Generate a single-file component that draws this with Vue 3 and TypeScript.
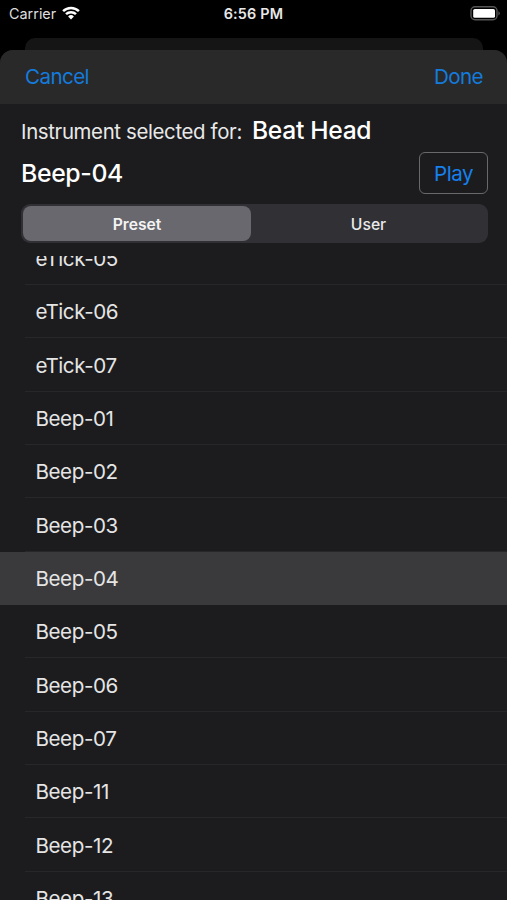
<script setup lang="ts">
import { ref } from 'vue'

const segments = ['Preset', 'User']
const activeSegment = ref('Preset')
const instruments = [
  'eTick-05', 'eTick-06', 'eTick-07',
  'Beep-01', 'Beep-02', 'Beep-03', 'Beep-04', 'Beep-05', 'Beep-06', 'Beep-07',
  'Beep-11', 'Beep-12', 'Beep-13',
]
const selected = ref('Beep-04')
</script>

<template>
  <div class="screen">
    <header class="status">
      <div class="carrier">
        <span>Carrier</span>
        <svg class="wifi" viewBox="0 0 18 14" width="18" height="14">
          <path d="M1.1 5.1a11.3 11.3 0 0 1 15.8 0" />
          <path d="M4 8.2a7.2 7.2 0 0 1 10 0" />
          <path class="dot" d="M9 13.4 6.1 10.5a4.1 4.1 0 0 1 5.8 0z" />
        </svg>
      </div>
      <span class="time">6:56 PM</span>
      <svg class="battery" viewBox="0 0 31 15" width="31" height="15">
        <rect class="shell" x="1" y="0.8" width="26" height="13" rx="4" />
        <rect class="charge" x="3.2" y="3" width="21.8" height="8.8" rx="1.6" />
        <path class="cap" d="M28.4 5.2c2 .8 2 3.4 0 4.2z" />
      </svg>
    </header>
    <div class="backdrop"></div>
    <main class="sheet">
      <nav class="bar">
        <button class="link">Cancel</button>
        <button class="link done">Done</button>
      </nav>
      <section class="details">
        <p class="caption"><span class="label">Instrument selected for:</span><span class="target">Beat Head</span></p>
        <div class="current">
          <h1>{{ selected }}</h1>
          <button class="play">Play</button>
        </div>
        <div class="segmented">
          <button
            v-for="s in segments"
            :key="s"
            class="segment"
            :class="{ active: s === activeSegment }"
            @click="activeSegment = s"
          >{{ s }}</button>
        </div>
      </section>
      <div class="viewport">
        <ul class="list">
          <li
            v-for="name in instruments"
            :key="name"
            class="row"
            :class="{ selected: name === selected }"
            @click="selected = name"
          ><span class="name">{{ name }}</span></li>
        </ul>
      </div>
    </main>
  </div>
</template>

<style>
body {
  margin: 0;
  background: #000;
}
</style>

<style scoped>
.screen {
  height: 900px;
  display: flex;
  flex-direction: column;
  overflow: hidden;
  background: #000;
  color: #fff;
  font-family: Inter, "Liberation Sans", sans-serif;
}
button {
  margin: 0;
  padding: 0;
  border: 0;
  background: none;
  color: inherit;
  font: inherit;
}
.status {
  height: 38px;
  flex: none;
  box-sizing: border-box;
  padding: 0 6px 11px 9px;
  display: grid;
  grid-template-columns: 1fr auto 1fr;
  align-items: center;
  font-size: 14.4px;
}
.carrier {
  display: flex;
  align-items: center;
  gap: 6px;
  color: #dedede;
}
.wifi {
  fill: none;
  stroke: #fff;
  stroke-width: 2.5;
  margin-top: -1px;
}
.wifi .dot {
  fill: #fff;
  stroke: none;
}
.time {
  margin-right: 3px;
  font-weight: 600;
  letter-spacing: 0.2px;
  color: #e8e8e8;
}
.battery {
  justify-self: end;
}
.shell {
  fill: none;
  stroke: #565656;
  stroke-width: 1.4;
}
.charge {
  fill: #fff;
}
.cap {
  fill: #565656;
}
.backdrop {
  height: 12px;
  flex: none;
  margin: 0 24px 0 25px;
  border-radius: 10px 10px 0 0;
  background: #151515;
}
.sheet {
  flex: 1;
  min-height: 0;
  display: flex;
  flex-direction: column;
  overflow: hidden;
  border-radius: 13px 13px 0 0;
  background: #1c1c1e;
}
.bar {
  height: 54px;
  flex: none;
  box-sizing: border-box;
  padding: 0 25px 1px;
  display: flex;
  align-items: center;
  justify-content: space-between;
  background: #292929;
}
.link {
  color: #147bdc;
  font-size: 20.6px;
  letter-spacing: -0.6px;
}
.done {
  margin-right: -1px;
}
.details {
  flex: none;
  height: 152px;
  box-sizing: border-box;
  padding: 11px 19px 0 21px;
}
.caption {
  margin: 0;
  height: 30px;
  display: flex;
  align-items: baseline;
  line-height: 30px;
  white-space: nowrap;
}
.label {
  width: 231px;
  font-size: 20.4px;
  letter-spacing: -0.35px;
  color: #e9e9e9;
}
.target {
  font-size: 24.6px;
  font-weight: 450;
  letter-spacing: -0.3px;
}
.current {
  height: 42px;
  margin-top: 7px;
  display: flex;
  align-items: center;
  justify-content: space-between;
}
h1 {
  margin: 0;
  font-size: 24.8px;
  font-weight: 450;
  letter-spacing: -0.35px;
}
.play {
  width: 69px;
  height: 42px;
  box-sizing: border-box;
  padding-top: 1px;
  border: 1.4px solid #69696b;
  border-radius: 6px;
  color: #1580ee;
  font-size: 20.6px;
  letter-spacing: -0.5px;
}
.segmented {
  height: 39px;
  margin-top: 10px;
  box-sizing: border-box;
  padding: 2px;
  display: grid;
  grid-template-columns: 228px 1fr;
  border-radius: 9px;
  background: #313135;
}
.segment {
  padding-top: 1px;
  border-radius: 8px;
  font-size: 15.7px;
  font-weight: 500;
  color: #e9e9eb;
}
.segment.active {
  background: #68686e;
  font-weight: 600;
  color: #f3f3f4;
}
.viewport {
  flex: 1;
  min-height: 0;
  overflow: hidden;
}
.list {
  margin: -24.3px 0 0;
  padding: 0;
  list-style: none;
}
.row {
  height: 53.35px;
  padding-left: 25px;
  box-sizing: border-box;
}
.name {
  display: flex;
  align-items: center;
  height: 100%;
  box-sizing: border-box;
  padding: 1px 0 0 10.4px;
  border-bottom: 1px solid #272729;
  font-size: 20.6px;
  letter-spacing: -0.4px;
  color: #e5e5e5;
}
.row.selected {
  background: #3a3a3c;
}
.row.selected .name {
  border-color: transparent;
}
</style>
